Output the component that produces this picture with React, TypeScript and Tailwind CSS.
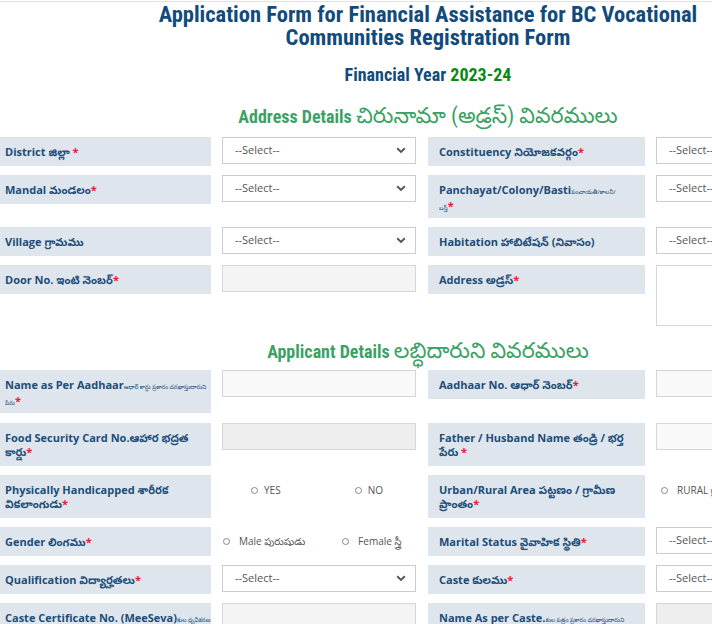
import React from "react";

const LBL = "font-['Open_Sans','Noto_Sans','Noto_Sans_Telugu',sans-serif]";
const HDR = "font-['Roboto_Condensed','Liberation_Sans_Narrow','Roboto','Noto_Sans_Telugu',sans-serif]";

function Star() {
  return <span className="text-[#e4202f]">*</span>;
}

function Label({ children, two, right }: { children: React.ReactNode; two?: boolean; right?: boolean }) {
  return (
    <div
      className={`w-[217px] shrink-0 overflow-hidden whitespace-nowrap bg-[#dee5ec] pl-[11px] pr-[8px] pt-[8px] text-[11px] leading-[14px] font-bold text-[#1c4d79] ${LBL} ${two ? "h-[43px]" : "h-[29px]"} ${right ? "ml-px" : ""}`}
    >
      {children}
    </div>
  );
}

function Small({ children }: { children: React.ReactNode }) {
  return <span className="text-[6px] leading-[14px] font-normal whitespace-nowrap align-baseline">{children}</span>;
}

function Select() {
  return (
    <div
      className={`w-[194px] shrink-0 h-[27px] border border-[#cccccc] bg-white flex items-center justify-between pl-[12px] pr-[9px] text-[11px] text-[#555] ${LBL}`}
    >
      <span>--Select--</span>
      <svg width="10" height="7" viewBox="0 0 10 7">
        <path d="M1.2 1.3 L5 5 L8.8 1.3" fill="none" stroke="#555" strokeWidth="1.9" />
      </svg>
    </div>
  );
}

function Input({ bg = "bg-[#f4f4f4]", h = "h-[27px]" }: { bg?: string; h?: string }) {
  return <div className={`w-[194px] shrink-0 ${h} border border-[#d6d6d6] ${bg}`} />;
}

function Radio({ children, cls = "" }: { children: React.ReactNode; cls?: string }) {
  return (
    <span className={`inline-flex items-center gap-[6px] text-[10px] text-[#555] font-normal whitespace-nowrap ${LBL} ${cls}`}>
      <span className="inline-block w-[7px] h-[7px] rounded-full border border-[#888]" />
      {children}
    </span>
  );
}

function Row({ children, mb = "mb-[9px]" }: { children: React.ReactNode; mb?: string }) {
  return <div className={`flex items-start gap-[11px] ${mb}`}>{children}</div>;
}

export default function App() {
  return (
    <div className="w-[712px] h-[624px] overflow-hidden bg-white relative">
      <div className="h-px bg-[#e2e2e2] mt-px" />
      <div className="ml-[-6px] w-[868px]">
        <div className={`text-center text-[22.5px] leading-[23px] font-bold text-[#124b7b] ${HDR} pt-[1px]`}>
          <div>Application Form for Financial Assistance for BC Vocational</div>
          <div>Communities Registration Form</div>
        </div>
        <div className={`text-center mt-[15px] text-[18px] leading-[22px] font-bold text-[#124b7b] ${HDR}`}>
          Financial Year <span className="text-[#0a8a12]">2023-24</span>
        </div>
        <div className={`text-center mt-[18px] text-[18px] leading-[24px] font-bold text-[#3aa264] ${HDR}`}>
          Address Details <span className="font-normal text-[22px]">చిరునామా (అడ్రస్) వివరములు</span>
        </div>

        <div className="mt-[8px]">
          <Row>
            <Label>
              District జిల్లా <Star />
            </Label>
            <Select />
            <Label right>
              Constituency నియోజకవర్గం<Star />
            </Label>
            <Select />
          </Row>
          <Row>
            <Label>
              Mandal మండలం<Star />
            </Label>
            <Select />
            <Label two right>
              Panchayat/Colony/Basti<Small>పంచాయతీ/కాలనీ/</Small>
              <br />
              <Small>బస్తీ</Small>
              <Star />
            </Label>
            <Select />
          </Row>
          <Row>
            <Label>Village గ్రామము</Label>
            <Select />
            <Label right>Habitation హాబిటేషన్ (నివాసం)</Label>
            <Select />
          </Row>
          <Row mb="mb-0">
            <Label>
              Door No. ఇంటి నెంబర్<Star />
            </Label>
            <Input />
            <Label right>
              Address అడ్రస్<Star />
            </Label>
            <Input bg="bg-white" h="h-[61px]" />
          </Row>
        </div>

        <div className={`text-center mt-[13px] text-[18px] leading-[24px] font-bold text-[#3aa264] ${HDR}`}>
          Applicant Details <span className="font-normal text-[22px]">లబ్ధిదారుని వివరములు</span>
        </div>

        <div className="mt-[6px]">
          <Row mb="mb-[10px]">
            <Label two>
              Name as Per Aadhaar<Small>ఆధార్ కార్డు ప్రకారం దరఖాస్తుదారుని</Small>
              <br />
              <Small>పేరు</Small>
              <Star />
            </Label>
            <Input bg="bg-[#f9f9f9]" />
            <Label right>
              Aadhaar No. ఆధార్ నెంబర్<Star />
            </Label>
            <Input bg="bg-[#f9f9f9]" />
          </Row>
          <Row>
            <Label two>
              Food Security Card No.ఆహార భద్రత
              <br />
              కార్డు<Star />
            </Label>
            <Input bg="bg-[#eeeeee]" />
            <Label two right>
              Father / Husband Name తండ్రి / భర్త
              <br />
              పేరు <Star />
            </Label>
            <Input bg="bg-[#f9f9f9]" />
          </Row>
          <Row>
            <Label two>
              Physically Handicapped శారీరక
              <br />
              వికలాంగుడు<Star />
            </Label>
            <div className="w-[194px] shrink-0 flex pt-[8px]">
              <Radio cls="ml-[29px]">YES</Radio>
              <Radio cls="ml-[74px]">NO</Radio>
            </div>
            <Label two right>
              Urban/Rural Area పట్టణం / గ్రామీణ
              <br />
              ప్రాంతం<Star />
            </Label>
            <div className="w-[194px] shrink-0 flex pt-[8px]">
              <Radio cls="ml-[5px] gap-[9px]">RURAL గ్రామీణ</Radio>
            </div>
          </Row>
          <Row>
            <Label>
              Gender లింగము<Star />
            </Label>
            <div className="w-[194px] shrink-0 flex pt-[7px]">
              <Radio cls="ml-[1px] gap-[9px]">Male పురుషుడు</Radio>
              <Radio cls="ml-[37px] gap-[9px]">Female స్త్రీ</Radio>
            </div>
            <Label right>
              Marital Status వైవాహిక స్థితి<Star />
            </Label>
            <Select />
          </Row>
          <Row>
            <Label>
              Qualification విద్యార్హతలు<Star />
            </Label>
            <Select />
            <Label right>
              Caste కులము<Star />
            </Label>
            <Select />
          </Row>
          <Row>
            <Label two>
              Caste Certificate No. (MeeSeva)<Small>కుల ధృవీకరణ పత్రం నెం.</Small>
              <br />
              <Small>(మీసేవ)</Small>
              <Star />
            </Label>
            <Input bg="bg-[#f4f4f4]" />
            <Label two right>
              Name As per Caste.<Small>కుల పత్రం ప్రకారం దరఖాస్తుదారుని</Small>
              <br />
              <Small>పేరు</Small>
              <Star />
            </Label>
            <Input bg="bg-[#eeeeee]" />
          </Row>
        </div>
      </div>
    </div>
  );
}
